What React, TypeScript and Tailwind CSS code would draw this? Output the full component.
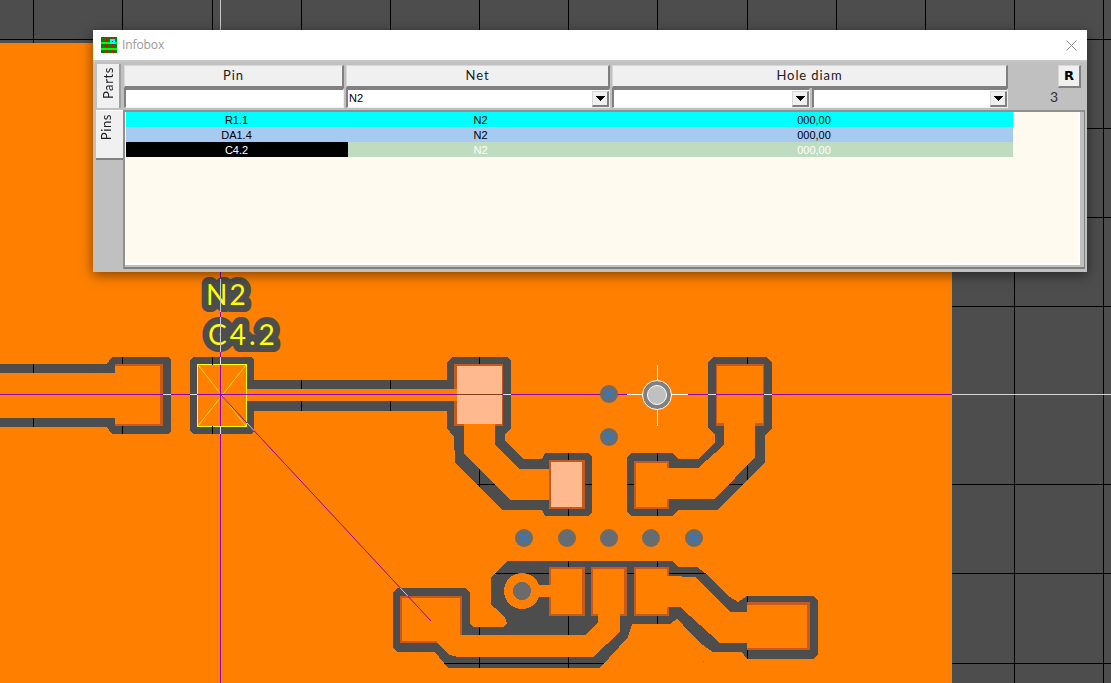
// App.tsx
import React from "react";

const GRID_X = [33, 122, 212, 301, 390, 479, 568, 657, 747, 836, 925, 1014, 1103];
const GRID_Y = [39, 128, 217, 306, 484, 573, 663];

const OUTER = [
  "0,364 107,364 112,357 168,357 171,360 171,431 168,434 112,434 107,427 0,427",
  "190,360 193,357 251,357 254,360 254,380 447,380 447,362 452,357 507,357 511,361 511,428 505,435 505,440 523,459 542,459 545,453 588,453 592,457 592,512 588,516 545,516 542,510 502,510 455,462 454,437 447,428 447,411 254,411 254,431 251,434 193,434 190,431",
  "708,363 713,357 767,357 772,363 772,428 765,435 765,463 717,510 678,510 673,516 632,516 627,512 627,457 632,453 672,453 678,459 698,459 715,442 715,435 708,428",
  "508,561 673,561 678,567 697,567 705,573 730,597 738,602 747,596 813,596 818,600 818,655 813,659 747,659 742,652 713,652 700,643 683,625 677,619 670,624 632,624 628,637 600,668 448,668 435,652 397,652 393,648 393,593 397,588 465,588 470,593 470,623 473,627 503,627 507,623 505,618 495,608 491,605 491,577",
];

const INNER = [
  "0,373 115,373 115,364 163,364 163,426 115,426 115,418 0,418",
  "197,365 247,365 247,389 457,389 457,401 247,401 247,426 197,426",
  "454,364 503,364 503,426 495,426 495,445 520,469 549,469 549,500 510,500 464,453 464,426 454,426",
  "549,460 585,460 585,509 549,509",
  "716,364 764,364 764,426 755,426 755,457 715,499 669,499 669,509 634,509 634,461 669,461 669,468 698,468 724,445 724,426 716,426",
  "400,596 462,596 462,635 585,635 598,622 598,615 620,615 620,632 593,657 458,657 450,655 437,643 400,643",
  "549,567 585,567 585,616 549,616 549,597 537,597 537,585 549,585",
  "591,567 627,567 627,616 591,616",
  "634,567 669,567 669,576 695,577 730,612 747,612 747,602 810,602 810,650 747,650 747,643 720,643 680,607 669,607 669,616 634,616",
];

// dark-orange pad rims, then what fills the pad
const PADS: [number, number, number, number, number, number, number, number, string][] = [
  [115, 364, 48, 62, 115, 366, 45, 58, "#ff8000"],
  [454, 364, 49, 62, 457, 366, 45, 58, "#ffb98f"],
  [549, 460, 36, 49, 551, 462, 31, 45, "#ffb98f"],
  [716, 364, 48, 62, 717, 366, 46, 57, "#ff8000"],
  [634, 461, 35, 48, 636, 463, 31, 44, "#ff8000"],
  [400, 596, 62, 47, 402, 598, 58, 43, "#ff8000"],
  [549, 567, 36, 49, 551, 569, 31, 45, "#ff8000"],
  [591, 567, 36, 49, 593, 569, 31, 45, "#ff8000"],
  [634, 567, 35, 49, 636, 569, 31, 45, "#ff8000"],
  [747, 602, 63, 48, 747, 605, 60, 43, "#ff8000"],
];

// traces painted over the rims where they enter a pad
const TRACES = [
  "402,598 460,598 460,635 585,635 598,622 598,612 620,612 620,632 593,657 458,657 450,655 437,643 437,641 402,641",
];

const VIAS = [
  [609, 394, 1, 1.4], [609, 437, 1, 1.4], [524, 538, 1, 1.4], [567, 538, 0.35, 1],
  [609, 538, 0.35, 1], [651, 538, 0.35, 1], [694, 538, 1, 1.4],
];

const Board = () => (
  <svg className="absolute inset-0" width={1111} height={683} viewBox="0 0 1111 683">
    <defs>
      <mask id="cut" maskUnits="userSpaceOnUse" x="0" y="0" width="1111" height="683">
        <rect width="1111" height="683" fill="black" />
        {OUTER.map((p) => <polygon key={p} points={p} fill="white" shapeRendering="crispEdges" />)}
        {INNER.map((p) => <polygon key={p} points={p} fill="black" shapeRendering="crispEdges" />)}
        <circle cx="522" cy="591" r="18" fill="black" />
        <rect x="535" y="585" width="15" height="12" fill="black" />
        <circle cx="522" cy="591" r="9" fill="white" />
      </mask>
    </defs>

    <g shapeRendering="crispEdges">
      {GRID_X.map((x) => <rect key={x} x={x} y={0} width={1} height={683} fill="#000" />)}
      {GRID_Y.map((y) => <rect key={y} x={0} y={y} width={1111} height={1} fill="#000" />)}
      <rect x={952} y={394} width={159} height={1} fill="#d4d4d4" />
      <rect x={220} y={0} width={1} height={43} fill="#c8c8c8" />
      <rect x={0} y={43} width={952} height={640} fill="#ff8000" />

      {OUTER.map((p) => <polygon key={p} points={p} fill="#4d4d4d" />)}
      {INNER.map((p) => <polygon key={p} points={p} fill="#ff8000" />)}
      <circle cx="522" cy="591" r="18" fill="#ff8000" />
      <rect x={535} y={585} width={15} height={12} fill="#ff8000" />
      <circle cx="522" cy="591" r="9" fill="#6b6b6b" />

      {PADS.map(([x, y, w, h, ix, iy, iw, ih, fill]) => (
        <g key={`${x}-${y}`}>
          <rect x={x} y={y} width={w} height={h} fill="#c55a1c" />
          <rect x={ix} y={iy} width={iw} height={ih} fill={fill} />
        </g>
      ))}
      {TRACES.map((p) => <polygon key={p} points={p} fill="#ff8000" />)}
      <rect x={464} y={424} width={31} height={3} fill="#ff8000" />
      <rect x={724} y={423} width={31} height={4} fill="#ff8000" />
      <rect x={665} y={468} width={8} height={31} fill="#ff8000" />
      <rect x={665} y={576} width={7} height={31} fill="#ff8000" />
      <rect x={745} y={612} width={5} height={31} fill="#ff8000" />
      <rect x={113} y={373} width={4} height={45} fill="#ff8000" />
      <rect x={454} y={389} width={3} height={12} fill="#ff8000" />
      <rect x={535} y={585} width={17} height={12} fill="#ff8000" />
      <rect x={703} y={661} width={1} height={1} fill="#c55a1c" />
    </g>

    {/* C4.2 outline and its cross */}
    <rect x={197.5} y={364.5} width={49} height={62} fill="none" stroke="#ffff00" strokeWidth={1} shapeRendering="crispEdges" />
    <path d="M198 365 L246 426 M246 365 L198 426" stroke="#ffe000" strokeWidth={1} />

    {/* ratsnest lines */}
    <g shapeRendering="crispEdges">
      <rect x={0} y={394} width={952} height={1} fill="#9000c0" />
      <rect x={220} y={272} width={1} height={411} fill="#9000c0" />
      <rect x={458} y={394} width={44} height={1} fill="#804020" />
    </g>
    <line x1={220} y1={394} x2={431} y2={621} stroke="#8a00b8" strokeWidth={1} />

    <g mask="url(#cut)">
      <g shapeRendering="crispEdges">
        {GRID_X.map((x) => <rect key={x} x={x} y={0} width={1} height={683} fill="#000" />)}
        {GRID_Y.map((y) => <rect key={y} x={0} y={y} width={1111} height={1} fill="#000" />)}
        <rect x={0} y={394} width={952} height={1} fill="#e0e0e0" />
        <rect x={220} y={272} width={1} height={411} fill="#e0e0e0" />
      </g>
      <line x1={220} y1={394} x2={431} y2={621} stroke="#d0d0d0" strokeWidth={1} />
    </g>

    {VIAS.map(([cx, cy, o, w]) => (
      <g key={`${cx}-${cy}`}>
        <circle cx={cx} cy={cy} r={9} fill="#6b6b6b" />
        <path
          d={`M${cx - 5} ${cy - 5} L${cx + 5} ${cy + 5} M${cx + 5} ${cy - 5} L${cx - 5} ${cy + 5}`}
          fill="none"
          stroke="#1480f0"
          strokeWidth={w}
          strokeOpacity={o}
        />
      </g>
    ))}

    {/* selected hole */}
    <path d="M657.5 365 V426 M627 394.5 H688" stroke="#fff" strokeWidth={1} shapeRendering="crispEdges" />
    <circle cx={657} cy={395} r={14.5} fill="#808080" stroke="#fff" strokeWidth={1} />
    <circle cx={657} cy={395} r={9.5} fill="#c0c0c0" stroke="#fff" strokeWidth={1} />

    {/* the halo leaves a hole round the full stop, so back it */}
    <rect x={238} y={336} width={26} height={16} rx={4} fill="#4d4d4d" />
    <g style={{ fontFamily: '"Lato", sans-serif' }} fontSize={28} fill="#ffff00">
      <text x={206} y={305} stroke="#4d4d4d" strokeWidth={14} strokeLinejoin="round" paintOrder="stroke" letterSpacing={2}>N2</text>
      <text x={208} y={345} stroke="#4d4d4d" strokeWidth={14} strokeLinejoin="round" paintOrder="stroke" letterSpacing={3}>C4.2</text>
    </g>
    <path d="M220.5 279 V312 M220.5 317 V352" stroke="#c8c8c8" strokeWidth={1} shapeRendering="crispEdges" />
  </svg>
);

const raised = "bg-[#f0f0f0] border-t border-l border-t-[#d8d8d8] border-l-[#d8d8d8] border-r-2 border-b-2 border-r-[#808080] border-b-[#808080]";
const sunken = "bg-white border-t-2 border-l-2 border-t-[#808080] border-l-[#808080] border-r border-b border-r-[#f0f0f0] border-b-[#f0f0f0]";

const HeaderCell = ({ label, width }: { label: string; width: string }) => (
  <div className={`${width} pr-[2px] h-[23px]`}>
    <div className={`${raised} h-full flex items-center justify-center font-['Lato',sans-serif] text-[13px] tracking-[0.9px] text-[#202020]`}>
      {label}
    </div>
  </div>
);

const Combo = ({ width, value }: { width: string; value?: string }) => (
  <div className={`${width} pr-[2px] h-[20px]`}>
    <div className={`${sunken} h-full flex items-center justify-between pl-[1px] font-['Liberation_Sans',sans-serif] text-[11px] text-black`}>
      <span>{value}</span>
      <div className={`${raised} w-[17px] h-[16px] flex items-center justify-center`}>
        <svg width="9" height="5" viewBox="0 0 9 5" shapeRendering="crispEdges">
          <path d="M0 0H9V1H8V2H7V3H6V4H5V5H4V4H3V3H2V2H1V1H0Z" fill="#000" />
        </svg>
      </div>
    </div>
  </div>
);

const ROWS = [
  { pin: "R1.1", bg: "bg-[#00ffff]", pinBg: "", text: "text-black" },
  { pin: "DA1.4", bg: "bg-[#a6caf0]", pinBg: "", text: "text-black" },
  { pin: "C4.2", bg: "bg-[#c0dcc0]", pinBg: "bg-black", text: "text-white" },
];

const Infobox = () => (
  <div className="absolute left-[93px] top-[30px] w-[994px] h-[242px] flex flex-col shadow-[0_3px_12px_rgba(0,0,0,0.5)]">
    <div className="h-[30px] bg-white flex items-center pl-[8px] pr-[10px]">
      <svg width="16" height="16" viewBox="0 0 16 16" shapeRendering="crispEdges" className="mr-[5px]">
        <rect width="16" height="16" fill="#008000" />
        <rect x="4" width="2" height="16" fill="#ff0000" />
        <rect x="10" width="2" height="16" fill="#ff0000" />
        <rect y="5" width="16" height="2" fill="#00ff00" />
        <rect y="11" width="16" height="2" fill="#00ff00" />
        <rect x="9" y="2" width="5" height="5" fill="#00ffff" />
        <rect x="11" y="4" width="1" height="1" fill="#000080" />
      </svg>
      <span className="font-['Open_Sans',sans-serif] text-[12px] tracking-[-0.1px] text-[#999999]">Infobox</span>
      <svg width="11" height="11" viewBox="0 0 11 11" className="ml-auto">
        <path d="M0.5 0.5 L10.5 10.5 M10.5 0.5 L0.5 10.5" stroke="#8c8c8c" strokeWidth="1" />
      </svg>
    </div>

    <div className="flex-1 min-h-0 flex bg-[#c0c0c0] border-t-2 border-t-[#c8c8c8] pr-[2px]">
      <div className="w-[30px] pl-[3px] pt-[2px] flex flex-col items-end gap-[2px] font-['Lato',sans-serif] text-[13px] tracking-[0.6px] text-[#202020]">
        <div className="w-[24px] h-[44px] mr-[2px] pl-[2px] pb-[6px] bg-[#f0f0f0] border-r-2 border-r-[#a0a0a0] flex items-center justify-center">
          <span className="[writing-mode:vertical-rl] rotate-180">Parts</span>
        </div>
        <div className="w-[27px] h-[50px] pr-[5px] pb-[14px] bg-[#f0f0f0] border-t border-t-white border-b-2 border-b-[#808080] flex items-center justify-center">
          <span className="[writing-mode:vertical-rl] rotate-180">Pins</span>
        </div>
      </div>

      <div className="flex-1 min-w-0 flex flex-col pt-[3px]">
        <div className="flex pl-[1px]">
          <HeaderCell label="Pin" width="w-[222px]" />
          <HeaderCell label="Net" width="w-[266px]" />
          <HeaderCell label="Hole diam" width="w-[398px]" />
          <div className="flex-1 flex justify-end pr-[4px]">
            <div className={`${raised} w-[23px] h-[23px] flex items-center justify-center font-['DejaVu_Sans',sans-serif] font-bold text-[13px] text-black`}>R</div>
          </div>
        </div>
        <div className="flex pl-[1px]">
          <div className="w-[222px] pr-[2px] h-[20px]">
            <div className={`${sunken} h-full`} />
          </div>
          <Combo width="w-[266px]" value="N2" />
          <Combo width="w-[200px]" />
          <Combo width="w-[198px]" />
          <div className="flex-1 flex justify-end pr-[27px] font-['Lato',sans-serif] text-[14px] leading-[18px] text-[#303030]">3</div>
        </div>
        <div className="flex-1 min-h-0 mt-[2px] mb-[3px] border-t-2 border-l-2 border-t-[#909090] border-l-[#909090] border-r border-b-2 border-r-[#808080] border-b-[#808080]">
          <div className="h-full border-r-4 border-b-2 border-r-[#c0c0c0] border-b-[#c0c0c0]">
            <div className="h-full bg-[#fffaf0] border-l border-b-2 border-r-2 border-l-white border-b-white border-r-white font-['Liberation_Sans',sans-serif] text-[11px] leading-[17px]">
              {ROWS.map((r) => (
                <div key={r.pin} className={`w-[887px] h-[15px] grid grid-cols-[222px_264px_401px] grid-rows-[15px] text-center ${r.bg} ${r.text}`}>
                  <div className={`${r.pinBg} pr-[1px]`}>{r.pin}</div>
                  <div className="pl-[1px]">N2</div>
                  <div className="pl-[3px]">000,00</div>
                </div>
              ))}
            </div>
          </div>
        </div>
      </div>
    </div>
  </div>
);

export default function App() {
  return (
    <div className="relative w-[1111px] h-[683px] overflow-hidden bg-[#4d4d4d]">
      <Board />
      <Infobox />
    </div>
  );
}
